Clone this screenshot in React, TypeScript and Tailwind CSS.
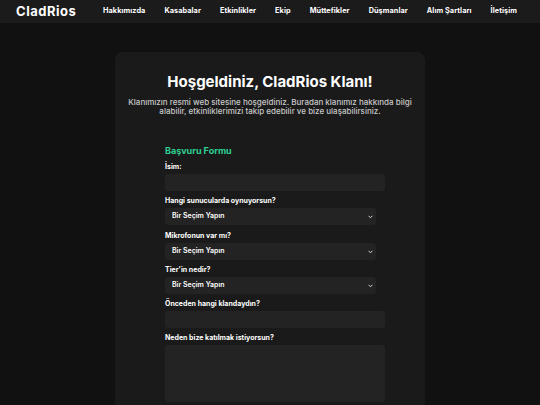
import React from 'react';

const NAV = ['Hakkımızda', 'Kasabalar', 'Etkinlikler', 'Ekip', 'Müttefikler', 'Düşmanlar', 'Alım Şartları', 'İletişim'];

const font = { fontFamily: 'Inter, "Noto Sans", sans-serif' };

function Chevron() {
  return (
    <svg width="5" height="4" viewBox="0 0 5 4" className="shrink-0">
      <path d="M0.6 0.8 L2.5 2.8 L4.4 0.8" fill="none" stroke="#cfcfcf" strokeWidth="1" />
    </svg>
  );
}

function Label({ children }: { children: React.ReactNode }) {
  return <div className="mb-[2px] text-[7px] font-bold leading-[10px] text-white">{children}</div>;
}

function TextInput() {
  return <div className="h-[17px] w-[220px] rounded-[3px] bg-[#232323]" />;
}

function Select() {
  return (
    <div className="flex h-[17px] w-[211px] items-center justify-between rounded-[3px] bg-[#232323] pl-[7px] pr-[3px]">
      <span className="text-[7px] font-semibold text-white">Bir Seçim Yapın</span>
      <Chevron />
    </div>
  );
}

export default function App() {
  return (
    <div className="min-h-[405px] bg-[#111111]" style={font}>
      <header className="flex h-[23px] items-center bg-[#1b1b1b] pl-[16px]">
        <span className="w-[87px] text-[13px] font-bold tracking-[0.04em] text-white">CladRios</span>
        <nav className="flex gap-[19px]">
          {NAV.map(n => (
            <span key={n} className="text-[7.3px] font-bold tracking-[0.01em] text-white">{n}</span>
          ))}
        </nav>
      </header>

      <main className="mx-auto mt-[29px] w-[310px] rounded-lg bg-[#1a1a1a] px-3 pb-6 pt-[20px]">
        <h1 className="text-center text-[15px] font-bold leading-[20px] text-white">Hoşgeldiniz, CladRios Klanı!</h1>
        <p className="-mx-2 mt-[6px] whitespace-nowrap text-center text-[8px] font-medium leading-[9px] text-[#c8c8c8]">
          Klanımızın resmi web sitesine hoşgeldiniz. Buradan klanımız hakkında bilgi
          <br />
          alabilir, etkinliklerimizi takip edebilir ve bize ulaşabilirsiniz.
        </p>

        <form className="ml-[38px] mt-[29px] w-[220px]">
          <h2 className="mb-[5px] text-[9px] font-bold leading-[12px] text-[#2ecf93]">Başvuru Formu</h2>
          <Label>İsim:</Label>
          <TextInput />
          <div className="mt-[5px]">
            <Label>Hangi sunucularda oynuyorsun?</Label>
            <Select />
          </div>
          <div className="mt-[6px]">
            <Label>Mikrofonun var mı?</Label>
            <Select />
          </div>
          <div className="mt-[5px]">
            <Label>Tier'in nedir?</Label>
            <Select />
          </div>
          <div className="mt-[5px]">
            <Label>Önceden hangi klandaydın?</Label>
            <TextInput />
          </div>
          <div className="mt-[5px]">
            <Label>Neden bize katılmak istiyorsun?</Label>
            <div className="h-[57px] w-[220px] rounded-[3px] bg-[#232323]" />
          </div>
        </form>
      </main>
    </div>
  );
}
